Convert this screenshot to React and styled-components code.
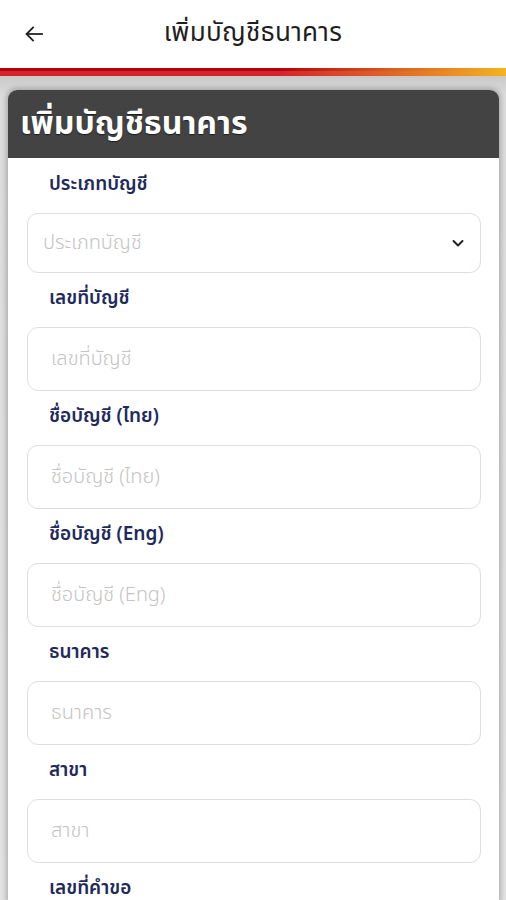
import React from "react";
import styled, {createGlobalStyle} from "styled-components";

const GlobalStyle = createGlobalStyle`
  html, body {
    margin: 0;
    padding: 0;
    background: #fff;
    font-family: "Noto Sans Thai", "Loma", "Garuda", "Noto Sans", "DejaVu Sans", sans-serif;
  }
`;

const fields = [
    {label: "เลขที่บัญชี"},
    {label: "ชื่อบัญชี (ไทย)"},
    {label: "ชื่อบัญชี (Eng)"},
    {label: "ธนาคาร"},
    {label: "สาขา"},
];

const App = () => {
    return (
        <StyledPage>
            <GlobalStyle/>
            <StyledTopBar>
                <StyledBack aria-label="back">
                    <svg width="24" height="24" viewBox="0 0 24 24" fill="none" stroke="#222" strokeWidth="1.8"
                         strokeLinecap="square">
                        <path d="M20 12H5"/>
                        <path d="M11 5.5L4.5 12L11 18.5"/>
                    </svg>
                </StyledBack>
                <h1>เพิ่มบัญชีธนาคาร</h1>
            </StyledTopBar>
            <StyledAccent/>

            <StyledContent>
                <StyledCard>
                    <StyledCardHeader>เพิ่มบัญชีธนาคาร</StyledCardHeader>
                    <StyledCardBody>
                        <StyledLabel $first>ประเภทบัญชี</StyledLabel>
                        <StyledSelect>
                            <span>ประเภทบัญชี</span>
                            <svg width="16" height="16" viewBox="0 0 16 16" fill="none" stroke="#222"
                                 strokeWidth="2" strokeLinecap="round" strokeLinejoin="round">
                                <path d="M3.5 6l4.5 4.5L12.5 6"/>
                            </svg>
                        </StyledSelect>

                        {fields.map((f) => (
                            <React.Fragment key={f.label}>
                                <StyledLabel>{f.label}</StyledLabel>
                                <StyledInput placeholder={f.label}/>
                            </React.Fragment>
                        ))}

                        <StyledLabel>เลขที่คำขอ</StyledLabel>
                        <StyledInput placeholder="เลขที่คำขอ"/>
                    </StyledCardBody>
                </StyledCard>
            </StyledContent>
        </StyledPage>
    );
};

const StyledPage = styled.div`
  width: 506px;
  height: 900px;
  overflow: hidden;
  display: flex;
  flex-direction: column;
  background: #fff;
`;

const StyledTopBar = styled.header`
  flex-shrink: 0;
  height: 68px;
  display: flex;
  align-items: center;
  justify-content: center;
  position: relative;
  background: #fff;

  h1 {
    margin: 0 0 2px 0;
    font-size: 26px;
    font-weight: 400;
    color: #1e1e1e;
    letter-spacing: 0.3px;
  }
`;

const StyledBack = styled.div`
  position: absolute;
  left: 22px;
  top: 22px;
  display: flex;
`;

const StyledAccent = styled.div`
  flex-shrink: 0;
  height: 8px;
  background: linear-gradient(to bottom, #b3000c 0, #b3000c 3px, #d4232b 3px, #d4232b 8px);
  position: relative;

  &::after {
    content: "";
    position: absolute;
    inset: 0;
    background: linear-gradient(to right, rgba(220, 130, 30, 0) 0%, rgba(220, 130, 30, 0) 55%, rgba(228, 120, 40, 0.8) 78%, #f4b320 100%);
  }
`;

const StyledContent = styled.main`
  flex: 1;
  min-height: 0;
  background: linear-gradient(to bottom, #c9c9c9, #dcdcdc 20px, #e2e2e2);
  padding: 14px 7px 0 8px;
`;

const StyledCard = styled.section`
  background: #fff;
  border-radius: 9px 9px 0 0;
  box-shadow: 0 0 5px 2px rgba(0, 0, 0, 0.22);
  overflow: hidden;
  height: 100%;
`;

const StyledCardHeader = styled.div`
  height: 68px;
  background: #434343;
  color: #fff;
  font-size: 32px;
  font-weight: 700;
  display: flex;
  align-items: center;
  padding-left: 12px;
  text-shadow: 0 1px 1px rgba(0, 0, 0, 0.6);
`;

const StyledCardBody = styled.div`
  padding: 15px 18px 0 19px;
  display: flex;
  flex-direction: column;
`;

const StyledLabel = styled.div`
  height: 24px;
  line-height: 24px;
  margin: ${p => (p.$first ? "0" : "14px")} 0 16px 22px;
  font-size: 19px;
  font-weight: 600;
  color: #1f2a5c;
`;

const StyledSelect = styled.div`
  flex-shrink: 0;
  height: 60px;
  box-sizing: border-box;
  border: 1px solid #dedede;
  border-radius: 11px;
  display: flex;
  align-items: center;
  justify-content: space-between;
  padding: 0 14px 0 15px;

  span {
    font-size: 20px;
    font-weight: 300;
    color: #c4c4c4;
  }
`;

const StyledInput = styled.input`
  flex-shrink: 0;
  height: 64px;
  box-sizing: border-box;
  border: 1px solid #dedede;
  border-radius: 11px;
  padding: 0 23px;
  font-family: inherit;
  font-size: 20px;
  font-weight: 300;
  outline: none;
  background: #fff;

  &::placeholder {
    color: #c4c4c4;
  }
`;

export default App;
